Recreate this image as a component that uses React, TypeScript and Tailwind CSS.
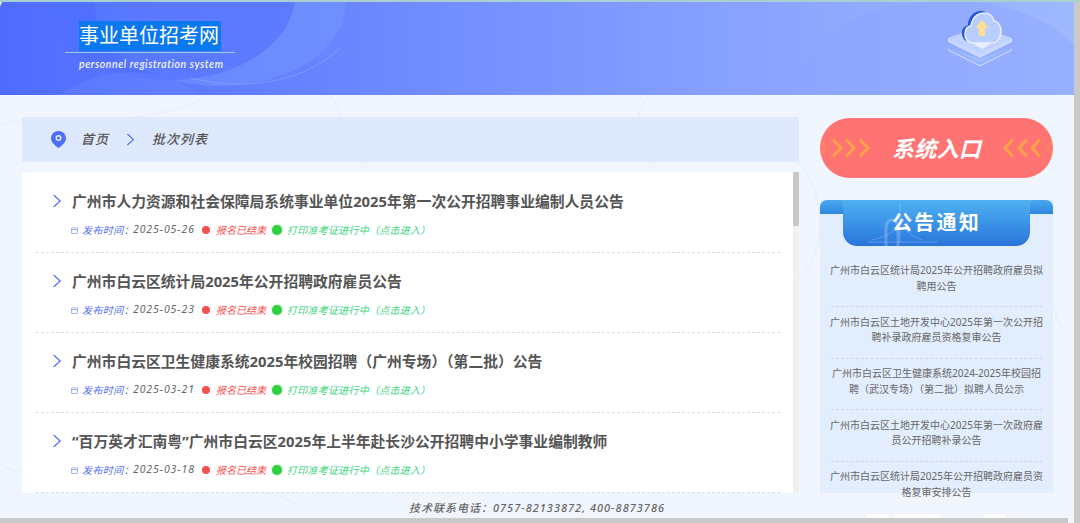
const rows = [
  { title: '广州市人力资源和社会保障局系统事业单位2025年第一次公开招聘事业编制人员公告', date: '2025-05-26' },
  { title: '广州市白云区统计局2025年公开招聘政府雇员公告', date: '2025-05-23' },
  { title: '广州市白云区卫生健康系统2025年校园招聘（广州专场）（第二批）公告', date: '2025-03-21' },
  { title: '“百万英才汇南粤”广州市白云区2025年上半年赴长沙公开招聘中小学事业编制教师', date: '2025-03-18' },
]

const notices = [
  '广州市白云区统计局2025年公开招聘政府雇员拟聘用公告',
  '广州市白云区土地开发中心2025年第一次公开招聘补录政府雇员资格复审公告',
  '广州市白云区卫生健康系统2024-2025年校园招聘（武汉专场）（第二批）拟聘人员公示',
  '广州市白云区土地开发中心2025年第一次政府雇员公开招聘补录公告',
  '广州市白云区统计局2025年公开招聘政府雇员资格复审安排公告',
]

function Chevron({ className }: { className: string }) {
  return (
    <svg viewBox="0 0 10 16" fill="none" stroke="currentColor" strokeWidth="1.4" className={className}>
      <path d="M1.2 1.2 8.6 8 1.2 14.8" />
    </svg>
  )
}

function Arrows({ flip }: { flip?: boolean }) {
  return (
    <svg viewBox="0 0 52 20" fill="none" stroke="#ffa04a" strokeWidth="3.2" className={`w-[52px] h-5 shrink-0 ${flip ? 'rotate-180' : ''}`}>
      <path d="M-1 2 7 10-1 18" opacity="0.3" />
      <path d="M13 1.500 21 10 13 18.500" />
      <path d="M26 1.500 34 10 26 18.500" />
      <path d="M40 1.500 48 10 40 18.500" />
    </svg>
  )
}

function CloudIcon() {
  return (
    <svg viewBox="0 0 70 62" className="w-[70px] h-[62px]">
      <path d="M35 60 3 44v1.500L35 61.500 67 45.500V44Z" fill="#cfe0ff" opacity="0.8" />
      <path d="M35 58 5 43l30 11 30-11Z" fill="#a9d0ff" opacity="0.5" />
      <path d="M35 53 3 37v-4l32 15 32-15v4Z" fill="#d8e3ff" opacity="0.8" />
      <path d="M35 48 3 33l32-11 32 11Z" fill="#c9d8ff" opacity="0.85" />
      <path d="M37 44 24 36c5-3 20-3 26 0Z" fill="#ffffff" opacity="0.65" />
      <path d="M25 37c-5 0-8-4-8-9 0-5 3-7 6-8 0-8 6-14 13-14 2 0 4 .5 5 1.500l-11 29.500Z" fill="#2458dc" />
      <path d="M28 38c-5 0-8-4-8-9 0-5 3-8 6-8 1-8 6-13 13-13 5 0 9 3 10 8 3 0 7 4 7 10 0 7-4 12-9 12Z" fill="#b9ceff" stroke="#e6eeff" strokeWidth="1.600" />
      <path d="M37 15 43.500 23H40v8h-6v-8h-3.500Z" fill="#ffe08f" />
    </svg>
  )
}

function Row({ title, date }: { title: string; date: string }) {
  return (
    <div className="h-20 border-b border-dashed border-[#dcdcdc] pt-[18px] pl-4">
      <div className="flex items-center h-5">
        <Chevron className="w-[10px] h-[14px] text-[#4f6ef7] shrink-0" />
        <h3 className="ml-[10px] text-[14.8px] leading-5 font-bold text-[#555] whitespace-nowrap">{title}</h3>
      </div>
      <div className="flex items-center h-4 mt-[11px] ml-[19px] text-[10px] italic whitespace-nowrap">
        <svg viewBox="0 0 8 8" fill="none" stroke="#6f8cf8" strokeWidth="0.8" className="w-[7px] h-[7px] shrink-0">
          <rect x="0.5" y="1" width="7" height="6.5" rx="1" />
          <path d="M0.5 3h7" />
        </svg>
        <span className="ml-[4px] w-[51px] text-[#4f6ef7] tracking-[0.4px]">发布时间：</span>
        <span className="w-[69px] text-[#666] text-[10.5px] tracking-[0.9px]">{date}</span>
        <span className="w-2 h-2 rounded-full bg-[#f55050] shrink-0" />
        <span className="ml-[6px] w-[56px] text-[#f55050]">报名已结束</span>
        <span className="w-[10px] h-[10px] rounded-full bg-[#2fcf3f] shadow-[0_0_3px_#8fe89a] shrink-0" />
        <span className="ml-[5px] text-[#3ad47c] tracking-[0.25px]">打印准考证进行中（点击进入）</span>
      </div>
    </div>
  )
}

export default function App() {
  return (
    <div className="relative w-[1080px] h-[523px] overflow-hidden bg-[#f1f6fe] font-['Noto_Sans','Noto_Sans_CJK_SC',sans-serif]">
      <div className="flex flex-col w-[1074px] h-[518px] rounded-tl-lg overflow-hidden relative">
        {/* faint contour lines behind the content */}
        <svg viewBox="0 0 1074 423" fill="none" stroke="#e4edfa" className="absolute left-0 top-[95px] w-[1074px] h-[423px]">
          <path d="M0 30c60-20 120 10 200-25M330 0c20 30 10 50 40 70M650 0c-30 30 10 50 0 70" />
          <path d="M790 60c40 30 40 110 0 130M1000 120c60 30 40 100 70 120M1054 110c-20 60 10 140-10 230" />
          <path d="M0 370c60 30 200-10 300 40M820 400c40-30 70-20 90-60" />
        </svg>

        <header className="relative h-[95px] shrink-0 overflow-hidden bg-gradient-to-r from-[#4e6bff] via-[#7a94ff] to-[#9fb9ff]">
          <svg viewBox="0 0 1074 95" className="absolute inset-0 w-full h-full">
            <ellipse cx="220" cy="6" rx="125" ry="80" fill="#7b9dff" opacity="0.4" />
            <ellipse cx="170" cy="-5" rx="125" ry="85" fill="#4f6dff" opacity="0.55" />
            <path d="M190 78c50 12 110 8 150-30" fill="none" stroke="#a8bcff" strokeWidth="0.6" opacity="0.7" />
            <path d="M60 95c40-30 100-30 140 0Z" fill="#6a86ff" opacity="0.4" />
            <ellipse cx="945" cy="78" rx="142" ry="78" fill="#8ea5ff" opacity="0.45" />
          </svg>
          <div className="absolute left-[65px] top-[21px] w-[170px]">
            <div className="ml-[14px] w-[142px] h-[30px] bg-[#0a78ee] text-white text-[20px] leading-[30px] whitespace-nowrap">事业单位招考网</div>
            <div className="mt-[1px] h-px bg-[#8fd0f0]" />
            <div className="ml-[14px] mt-[4px] text-[10.5px] leading-[14px] italic font-medium text-white whitespace-nowrap font-['Lato',sans-serif] tracking-[0.58px]">personnel registration system</div>
          </div>
          <div className="absolute left-[945px] top-[5px]">
            <CloudIcon />
          </div>
        </header>

        <main className="relative flex flex-1 min-h-0 pt-[22px] pl-[22px]">
          <section className="w-[777px] shrink-0">
            <nav className="flex items-center h-[45px] bg-[#dfe9fe] pl-[29px] text-[13px] italic font-medium text-[#555] tracking-[1px]">
              <svg viewBox="0 0 15 17" className="w-[15px] h-[17px] mr-[15px]">
                <path d="M7.5 0C3.4 0 0 3.200 0 7.200 0 11.500 4.500 14.800 7.500 17 10.500 14.800 15 11.500 15 7.200 15 3.200 11.600 0 7.500 0Z" fill="#4f6ef7" />
                <circle cx="7.500" cy="7" r="3" fill="#dfe9fe" />
                <circle cx="7.500" cy="7" r="1.600" fill="#4f6ef7" />
              </svg>
              <span>首页</span>
              <Chevron className="w-[9px] h-[13px] ml-[17px] mr-[17px] text-[#4f6ef7]" />
              <span>批次列表</span>
            </nav>
            <div className="flex mt-[10px] h-[321px] bg-white overflow-hidden">
              <div className="flex-1 pt-px pl-[14px] pr-[13px]">
                {rows.map(r => (
                  <Row key={r.date} title={r.title} date={r.date} />
                ))}
              </div>
              <div className="w-[6px] bg-[#f1f1f1]">
                <div className="h-[54px] bg-[#c8c8c8] rounded-[1px]" />
              </div>
            </div>
          </section>

          <aside className="w-[233px] ml-[21px] shrink-0">
            <div className="flex items-center justify-between h-[60px] mt-px rounded-full bg-[#ff7373] overflow-hidden">
              <Arrows />
              <span className="text-[22px] font-bold italic text-white tracking-[0.2px]">系统入口</span>
              <Arrows flip />
            </div>
            <div className="relative mt-[22px] h-[293px] bg-[#e2edfd]">
              <div className="absolute left-0 top-0 w-[28px] h-[14px] rounded-t-[7px] bg-gradient-to-b from-[#4aa8ee] to-[#2f86e0]" />
              <div className="absolute right-0 top-0 w-[28px] h-[14px] rounded-t-[7px] bg-gradient-to-b from-[#4aa8ee] to-[#2f86e0]" />
              <div className="relative mx-[23px] h-[46px] rounded-b-[14px] bg-gradient-to-b from-[#4fb0f2] to-[#2a75db] overflow-hidden flex items-center justify-center">
                <svg viewBox="0 0 70 46" fill="none" stroke="#ffffff" strokeOpacity="0.22" className="absolute left-[25px] top-0 w-[70px] h-[46px]">
                  <path d="M0 42h70M3 40c14-3 22-6 27-16M55 40c-10-3-17-8-20-16" />
                  <path strokeWidth="3" d="M18 46V28c0-11 12-11 12 0v18" />
                  <path d="M32 4v38" />
                </svg>
                <span className="relative text-[20px] font-bold text-white tracking-[2.200px]">公告通知</span>
              </div>
              <ul className="px-[11px] pt-[9.500px] text-[10px] leading-[15.500px] text-[#666] text-center">
                {notices.map((n, i) => (
                  <li key={n} className={i < notices.length - 1 ? 'h-[51.500px] pt-[7.500px] border-b border-dashed border-[#cfd6e0]' : 'pt-[7.500px]'}>
                    <div className="-mx-[3px]">{n}</div>
                  </li>
                ))}
              </ul>
            </div>
          </aside>

          <div className="absolute left-[866px] top-[419px] flex items-start gap-[7px]">
            <span className="w-[22px] h-[10px] bg-white rounded-[2px]" />
            <span className="w-[45px] h-[10px] bg-white rounded-[2px]" />
            <span className="w-[30px]" />
            <span className="w-[22px] h-[10px] bg-white rounded-[2px]" />
          </div>
        </main>

        <footer className="relative h-[25px] shrink-0 text-center text-[11px] leading-[29px] font-medium italic text-[#666] tracking-[1px]">
          技术联系电话：0757-82133872, 400-8873786
        </footer>
      </div>
      <div className="absolute left-0 bottom-0 w-[1068px] h-[5px] bg-[#c9c9c9]" />
      <div className="absolute right-0 top-[2px] w-[6px] h-[521px] bg-[#c9c9c9]" />
      <div className="absolute left-0 top-0 w-full h-[2px] bg-[#a9cfd0]" />
    </div>
  )
}
